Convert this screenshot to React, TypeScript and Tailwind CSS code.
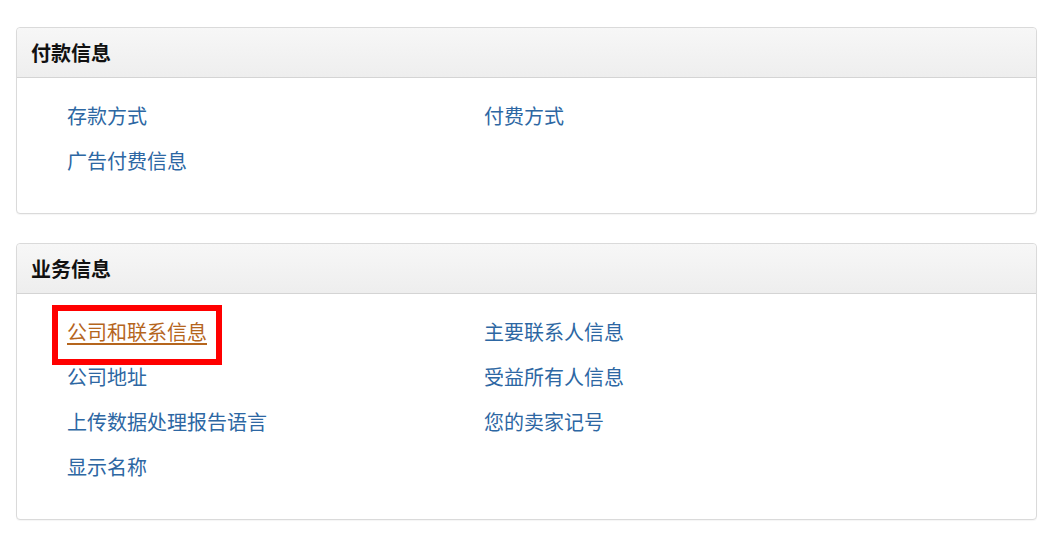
import React from 'react';

const font = { fontFamily: '"Microsoft YaHei", "Noto Sans CJK SC", "Noto Sans", sans-serif' };

type LinkItem = { label: string; active?: boolean };

const Section: React.FC<{ title: string; links: LinkItem[] }> = ({ title, links }) => (
  <div className="rounded-[4px] border border-[#dadada] bg-white shadow-[0_1px_1px_rgba(0,0,0,0.04)]">
    <div className="flex h-[50px] items-center rounded-t-[4px] border-b border-[#d4d4d4] bg-gradient-to-b from-[#f7f7f7] to-[#eeeeee] pl-[14px]">
      <h3 className="text-[20px] font-bold text-[#111]">{title}</h3>
    </div>
    <div className="grid grid-cols-[417px_1fr] pt-[15px] pb-[30px] pl-[50px]">
      {links.map((link) => (
        <div key={link.label} className="flex h-[45px] items-center">
          {link.active ? (
            <span className="relative">
              <a className="text-[20px] text-[#b5651d] underline underline-offset-[3px]">{link.label}</a>
              {/* annotation box */}
              <span className="pointer-events-none absolute -left-[15px] -top-[12px] h-[60px] w-[170px] border-[6px] border-[#ff0000]" />
            </span>
          ) : (
            <a className="text-[20px] text-[#2d67a3]">{link.label}</a>
          )}
        </div>
      ))}
    </div>
  </div>
);

export default function App() {
  return (
    <div className="min-h-screen bg-white px-[16px] pt-[27px]" style={font}>
      <div className="flex w-[1021px] flex-col gap-[29px]">
        <Section
          title="付款信息"
          links={[{ label: '存款方式' }, { label: '付费方式' }, { label: '广告付费信息' }]}
        />
        <Section
          title="业务信息"
          links={[
            { label: '公司和联系信息', active: true },
            { label: '主要联系人信息' },
            { label: '公司地址' },
            { label: '受益所有人信息' },
            { label: '上传数据处理报告语言' },
            { label: '您的卖家记号' },
            { label: '显示名称' },
          ]}
        />
      </div>
    </div>
  );
}
